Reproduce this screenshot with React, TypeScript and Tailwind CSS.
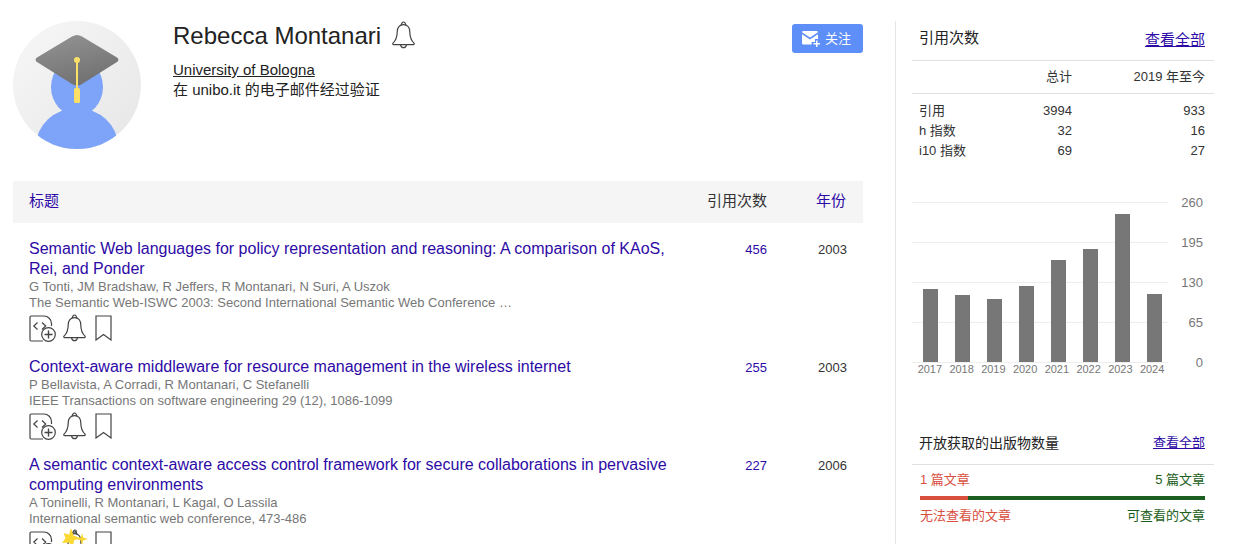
import React from 'react';

const FONT = "font-['Liberation_Sans','Noto_Sans_CJK_SC',sans-serif]";

interface Article {
  title: string;
  authors: string;
  venue: string;
  cited: number;
  year: number;
  starred?: boolean;
}

const articles: Article[] = [
  {
    title: 'Semantic Web languages for policy representation and reasoning: A comparison of KAoS, Rei, and Ponder',
    authors: 'G Tonti, JM Bradshaw, R Jeffers, R Montanari, N Suri, A Uszok',
    venue: 'The Semantic Web-ISWC 2003: Second International Semantic Web Conference …',
    cited: 456,
    year: 2003,
  },
  {
    title: 'Context-aware middleware for resource management in the wireless internet',
    authors: 'P Bellavista, A Corradi, R Montanari, C Stefanelli',
    venue: 'IEEE Transactions on software engineering 29 (12), 1086-1099',
    cited: 255,
    year: 2003,
  },
  {
    title: 'A semantic context-aware access control framework for secure collaborations in pervasive computing environments',
    authors: 'A Toninelli, R Montanari, L Kagal, O Lassila',
    venue: 'International semantic web conference, 473-486',
    cited: 227,
    year: 2006,
    starred: true,
  },
];

const metrics = [
  { label: '引用', total: 3994, recent: 933 },
  { label: 'h 指数', total: 32, recent: 16 },
  { label: 'i10 指数', total: 69, recent: 27 },
];

const bars = [
  { year: 2017, height: 73 },
  { year: 2018, height: 67 },
  { year: 2019, height: 63 },
  { year: 2020, height: 76 },
  { year: 2021, height: 102 },
  { year: 2022, height: 113 },
  { year: 2023, height: 148 },
  { year: 2024, height: 68 },
];

function BellIcon({ className }: { className: string }) {
  return (
    <svg viewBox="0 0 23 28" fill="none" stroke="#444" strokeWidth="1.2" className={className}>
      <path d="M9.3 4.3C9.3 2.9 10.2 1 11.5 1s2.2 1.9 2.2 3.3" />
      <path d="M11.5 3.6c-4 0-6.3 3.2-6.3 7.4 0 4.6-1 8-4.2 11.2-.5.6-.2 1.4.6 1.4h19.8c.8 0 1.1-.8.6-1.4-3.2-3.2-4.2-6.6-4.2-11.2 0-4.2-2.3-7.4-6.3-7.4z" />
      <path d="M8.6 23.8c.3 1.9 1.4 2.9 2.9 2.9s2.6-1 2.9-2.9" />
    </svg>
  );
}

function CodeDocIcon() {
  return (
    <svg viewBox="0 0 28 27" fill="none" stroke="#444" strokeWidth="1.2" className="w-[28px] h-[27px]">
      <path d="M14 26H2.2A1.2 1.2 0 0 1 1 24.8V2.2A1.2 1.2 0 0 1 2.2 1H15c4 0 7.5 3.5 7.5 7.5V11" />
      <path d="M8.5 7.5 4.8 11l3.7 3.5M13 7.5l3.7 3.5-3.7 3.5" />
      <circle cx="19.5" cy="19.5" r="6.8" />
      <path d="M19.5 15.5v8M15.5 19.5h8" strokeWidth="1.4" />
    </svg>
  );
}

function BookmarkIcon() {
  return (
    <svg viewBox="0 0 17 26" fill="none" stroke="#444" strokeWidth="1.2" className="w-[17px] h-[26px]">
      <path d="M1 1h15v24l-7.5-5.5L1 25z" />
    </svg>
  );
}

function StarBurst() {
  return (
    <svg viewBox="0 0 26 20" className="absolute -top-[3px] -left-[1px] w-[26px] h-[20px]">
      <circle cx="13" cy="4.5" r="1.6" fill="none" stroke="#444" strokeWidth="1" />
      <path d="M9 1l2.5 7.5L18 11l-6 2.500-1 6.500-4-4.500L0 16l3.500-5L1.500 6 7 7.500z" fill="#fbd832" />
      <path d="M20 6l1.200 4.500 4.800 1.500-4.800 1.500L20 19l-1.200-5.500L14 12l4.800-1.500z" fill="#fbd832" />
    </svg>
  );
}

function Avatar() {
  return (
    <svg viewBox="0 0 128 128" className="w-[128px] h-[128px] shrink-0">
      <defs>
        <linearGradient id="avatar-bg" x1="0" y1="0" x2="1" y2="1">
          <stop offset="0" stopColor="#f7f7f7" />
          <stop offset="1" stopColor="#e6e6e6" />
        </linearGradient>
        <linearGradient id="cap" x1="0.3" y1="0" x2="0.7" y2="1">
          <stop offset="0" stopColor="#919191" />
          <stop offset="1" stopColor="#6f6f6f" />
        </linearGradient>
        <clipPath id="avatar-clip">
          <circle cx="64" cy="64" r="64" />
        </clipPath>
      </defs>
      <circle cx="64" cy="64" r="64" fill="url(#avatar-bg)" />
      <g clipPath="url(#avatar-clip)">
        <ellipse cx="64" cy="66" rx="26" ry="29" fill="#7da4f8" />
        <ellipse cx="64" cy="125" rx="41" ry="38" fill="#7da4f8" />
      </g>
      <path
        d="M59 15.500q5-3 10 0L104 36.500a2.500 2.500 0 0 1 0 4.500L69 63q-5 3-10 0L24 41a2.500 2.500 0 0 1 0-4.500z"
        fill="url(#cap)"
      />
      <path d="M64 39v30" stroke="#fbdf66" strokeWidth="2" />
      <circle cx="64" cy="39" r="3" fill="#fbdf66" />
      <rect x="61" y="67" width="6" height="15" rx="1.500" fill="#fbdf66" />
    </svg>
  );
}

function MailPlus() {
  return (
    <svg viewBox="0 0 18 16" className="w-[18px] h-[16px]" fill="#fff">
      <path d="M1.500 0h13A1.500 1.500 0 0 1 16 1.200L8 6.500 0 1.200A1.500 1.500 0 0 1 1.500 0z" />
      <path d="M0 3.200l8 5.200 8-5.200V8h-3v3H9.600v2.500H1.500A1.500 1.500 0 0 1 0 12z" />
      <path d="M14 9.500h1.500V12H18v1.500h-2.500V16H14v-2.500h-2.500V12H14z" />
    </svg>
  );
}

function ArticleRow({ article }: { article: Article }) {
  return (
    <div className="flex pl-[16px] pr-[16px] pb-[14px]">
      <div className="w-[638px]">
        <div className="text-[16px] leading-[20px] text-[#2d0aa6]">{article.title}</div>
        <div className="text-[13px] leading-[16px] text-[#777]">{article.authors}</div>
        <div className="text-[13px] leading-[16px] text-[#777]">{article.venue}</div>
        <div className="flex items-start gap-[6px] h-[28px] mt-[4px]">
          <CodeDocIcon />
          <div className="relative -mt-[1px]">
            <BellIcon className="w-[23px] h-[28px]" />
            {article.starred && <StarBurst />}
          </div>
          <div className="ml-[3px]">
            <BookmarkIcon />
          </div>
        </div>
      </div>
      <div className="w-[100px] pt-px text-right text-[13px] leading-[20px] text-[#2d0aa6]">{article.cited}</div>
      <div className="w-[80px] pt-px text-right text-[13px] leading-[20px] text-[#333]">{article.year}</div>
    </div>
  );
}

function CitationChart() {
  return (
    <div className="flex mt-[41px]">
      <div className="w-[256px]">
        <div className="relative h-[161px]">
          <div className="absolute inset-0 flex flex-col justify-between">
            {[0, 1, 2, 3, 4].map((i) => (
              <div key={i} className="h-px bg-[#eeeeee]" />
            ))}
          </div>
          <div className="relative flex items-end h-[160px] pl-[11px] gap-[17px]">
            {bars.map((bar) => (
              <div key={bar.year} className="w-[15px] bg-[#777777]" style={{ height: bar.height }} />
            ))}
          </div>
        </div>
        <div className="flex pl-[2px] text-[11px] leading-[12px] text-[#777]">
          {bars.map((bar) => (
            <div key={bar.year} className="w-[32px] text-center">
              {bar.year}
            </div>
          ))}
        </div>
      </div>
      <div className="w-[36px] h-[161px] -mt-[7px] pr-px flex flex-col justify-between text-right text-[13px] leading-[16px] text-[#777] gap-[24px]">
        <div>260</div>
        <div>195</div>
        <div>130</div>
        <div>65</div>
        <div>0</div>
      </div>
    </div>
  );
}

export default function App() {
  return (
    <div className={`flex w-[1235px] h-[544px] overflow-hidden bg-white ${FONT}`}>
      <div className="ml-[13px] w-[850px] shrink-0">
        <div className="flex h-[181px] pt-[21px]">
          <Avatar />
          <div className="ml-[32px] flex-1">
            <div className="flex items-start">
              <div className="text-[24px] leading-[30px] text-[#222]">Rebecca Montanari</div>
              <BellIcon className="ml-[11px] w-[23px] h-[28px]" />
            </div>
            <div className="mt-[9px] text-[15px] leading-[19px] text-[#222] underline">University of Bologna</div>
            <div className="text-[15px] leading-[21px] text-[#222]">在 unibo.it 的电子邮件经过验证</div>
          </div>
          <button className="flex items-center justify-start gap-[5px] pl-[10px] w-[71px] h-[29px] mt-[3px] rounded-[3px] bg-[#5e8ef7] text-[13px] text-white">
            <MailPlus />
            关注
          </button>
        </div>

        <div className="flex items-center h-[42px] pb-[2px] pl-[16px] pr-[16px] bg-[#f5f5f5] text-[15px]">
          <div className="w-[638px] text-[#2d0aa6]">标题</div>
          <div className="w-[100px] text-right text-[#333]">引用次数</div>
          <div className="w-[79px] text-right text-[#2d0aa6]">年份</div>
        </div>

        <div className="pt-[16px]">
          {articles.map((article) => (
            <ArticleRow key={article.cited} article={article} />
          ))}
        </div>
      </div>

      <div className="mt-[21px] ml-[32px] pl-[16px] w-[319px] shrink-0 border-l border-[#e5e5e5]">
        <div className="flex justify-between items-start h-[40px] border-b border-[#e0e0e0] pl-[7px] pr-[9px]">
          <div className="text-[15px] leading-[20px] mt-[7px] text-[#222]">引用次数</div>
          <div className="text-[15px] leading-[20px] mt-[9px] text-[#2d0aa6] underline">查看全部</div>
        </div>
        <div className="flex items-center justify-end h-[33px] border-b border-[#e0e0e0] pr-[9px] text-[13px] text-[#333]">
          <div>总计</div>
          <div className="w-[133px] text-right">2019 年至今</div>
        </div>
        <div className="pt-[7px] pl-[7px] pr-[9px] text-[13px] leading-[20px] text-[#333]">
          {metrics.map((metric) => (
            <div key={metric.label} className="flex">
              <div className="flex-1">{metric.label}</div>
              <div className="text-right">{metric.total}</div>
              <div className="w-[133px] text-right">{metric.recent}</div>
            </div>
          ))}
        </div>

        <CitationChart />

        <div className="mt-[47px] flex justify-between items-center h-[43px] border-b border-[#e0e0e0] pl-[7px] pr-[9px]">
          <div className="text-[14px] text-[#222]">开放获取的出版物数量</div>
          <div className="text-[13px] text-[#2d0aa6] underline">查看全部</div>
        </div>
        <div className="flex justify-between mt-[6px] pl-[8px] pr-[9px] text-[13px] leading-[18px]">
          <div className="text-[#d9503f]">1 篇文章</div>
          <div className="text-[#1b5e20]">5 篇文章</div>
        </div>
        <div className="flex h-[4px] mt-[7px] ml-[8px] mr-[9px]">
          <div className="w-[48px] bg-[#d9503f]" />
          <div className="flex-1 bg-[#1b5e20]" />
        </div>
        <div className="flex justify-between mt-[7px] pl-[8px] pr-[9px] text-[13px] leading-[18px]">
          <div className="text-[#d9503f]">无法查看的文章</div>
          <div className="text-[#1b5e20]">可查看的文章</div>
        </div>
        <div className="mt-[19px] pl-[8px] text-[13px] leading-[18px] text-[#777]">根据资助方的强制性开放获取政策</div>
      </div>
    </div>
  );
}
